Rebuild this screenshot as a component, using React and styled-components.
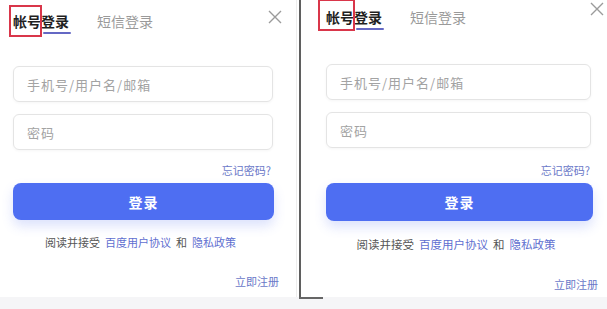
import React from "react";
import styled, { createGlobalStyle, css } from "styled-components";

const GlobalStyle = createGlobalStyle`
  html, body {
    margin: 0;
    padding: 0;
    background: #f5f5f7;
    font-family: "Noto Sans CJK SC", "Noto Sans", sans-serif;
  }
`;

const Page = styled.div`
  display: flex;
  width: 607px;
  height: 309px;
  background: #f5f5f7;
`;

const Gap = styled.div`
  width: 2px;
  height: 297px;
  background: #fff;
`;

const Panel = styled.section`
  position: relative;
  box-sizing: border-box;
  height: 297px;
  background: #fff;
  display: flex;
  flex-direction: column;
  ${(p) =>
    p.$alt
      ? css`
          width: 308px;
          padding: 0 16px 0 25px;
          border-left: 2px solid #5f5f5f;
          &::after {
            content: "";
            position: absolute;
            left: -2px;
            bottom: -2px;
            width: 24px;
            height: 2px;
            background: #666;
          }
        `
      : css`
          width: 297px;
          padding: 0 23px 0 13px;
          border-right: 1px solid #ededed;
        `}
`;

const Header = styled.div`
  display: flex;
  align-items: flex-start;
  padding-top: ${(p) => (p.$alt ? 8 : 12)}px;
  height: ${(p) => (p.$alt ? 24 : 22)}px;
`;

const Tab = styled.div`
  position: relative;
  font-size: 14px;
  line-height: 18px;
  font-weight: ${(p) => (p.$active ? 700 : 400)};
  color: ${(p) => (p.$active ? "#1f1f1f" : "#9a9a9a")};
  margin-right: 28px;
  ${(p) =>
    p.$active &&
    css`
      &::after {
        content: "";
        position: absolute;
        left: 30px;
        right: -2px;
        bottom: -4px;
        height: 2px;
        border-radius: 1px;
        background: #6468c4;
      }
    `}
`;

const Mark = styled.span`
  position: relative;
  &::before {
    content: "";
    position: absolute;
    left: ${(p) => (p.$alt ? -8 : -4)}px;
    right: -1px;
    top: ${(p) => (p.$alt ? -8 : -6)}px;
    bottom: ${(p) => (p.$alt ? -4 : -6)}px;
    border: 2px solid #d9364a;
  }
`;

const Close = styled.button`
  margin-left: auto;
  margin-right: ${(p) => (p.$alt ? -13 : -9)}px;
  margin-top: ${(p) => (p.$alt ? -6 : -2)}px;
  padding: 0;
  border: 0;
  background: none;
  width: 14px;
  height: 14px;
  display: flex;
`;

const Field = styled.div`
  box-sizing: border-box;
  height: 36px;
  margin-top: ${(p) => p.$top}px;
  border: 1px solid #e4e4e4;
  border-radius: 6px;
  box-shadow: 0 1px 3px rgba(0, 0, 0, 0.04);
  display: flex;
  align-items: center;
  padding-left: 13px;
  font-size: 13px;
  letter-spacing: 1px;
  color: #a3a3a3;
`;

const SmallLink = styled.a`
  align-self: flex-end;
  font-size: 11px;
  line-height: 16px;
  color: #6a78c8;
  text-decoration: none;
  margin-top: ${(p) => p.$top}px;
  margin-right: ${(p) => p.$shift}px;
`;

const Submit = styled.button`
  box-sizing: border-box;
  height: ${(p) => (p.$alt ? 38 : 37)}px;
  margin-top: 5px;
  margin-right: ${(p) => (p.$alt ? -2 : -1)}px;
  border: 0;
  border-radius: 8px;
  background: #4e6ef2;
  box-shadow: 0 6px 12px rgba(78, 110, 242, 0.2);
  color: #fff;
  font-family: inherit;
  font-size: 14px;
  font-weight: 700;
  letter-spacing: 1px;
`;

const Agree = styled.p`
  margin: ${(p) => (p.$alt ? 15 : 14)}px 0 0;
  text-align: center;
  font-size: ${(p) => (p.$alt ? 11.5 : 11)}px;
  line-height: 16px;
  color: #555;
  a {
    color: #5f6fd0;
    text-decoration: none;
    margin: 0 5px;
  }
`;

const X = () => (
  <svg width="14" height="14" viewBox="0 0 14 14">
    <path d="M1 1 L13 13 M13 1 L1 13" stroke="#9b9b9b" strokeWidth="1.4" fill="none" />
  </svg>
);

const LoginPanel = ({ alt }) => (
  <Panel $alt={alt}>
    <Header $alt={alt}>
      <Tab $active>
        <Mark $alt={alt}>帐号</Mark>登录
      </Tab>
      <Tab>短信登录</Tab>
      <Close $alt={alt}>
        <X />
      </Close>
    </Header>
    <Field $top={32}>手机号/用户名/邮箱</Field>
    <Field $top={12}>密码</Field>
    <SmallLink $top={alt ? 14 : 12} $shift={alt ? 1 : 2}>忘记密码?</SmallLink>
    <Submit $alt={alt}>登录</Submit>
    <Agree $alt={alt}>
      阅读并接受<a>百度用户协议</a>和<a>隐私政策</a>
    </Agree>
    <SmallLink $top={alt ? 24 : 23} $shift={alt ? -7 : -6}>立即注册</SmallLink>
  </Panel>
);

export default function App() {
  return (
    <>
      <GlobalStyle />
      <Page>
        <LoginPanel />
        <Gap />
        <LoginPanel alt />
      </Page>
    </>
  );
}
